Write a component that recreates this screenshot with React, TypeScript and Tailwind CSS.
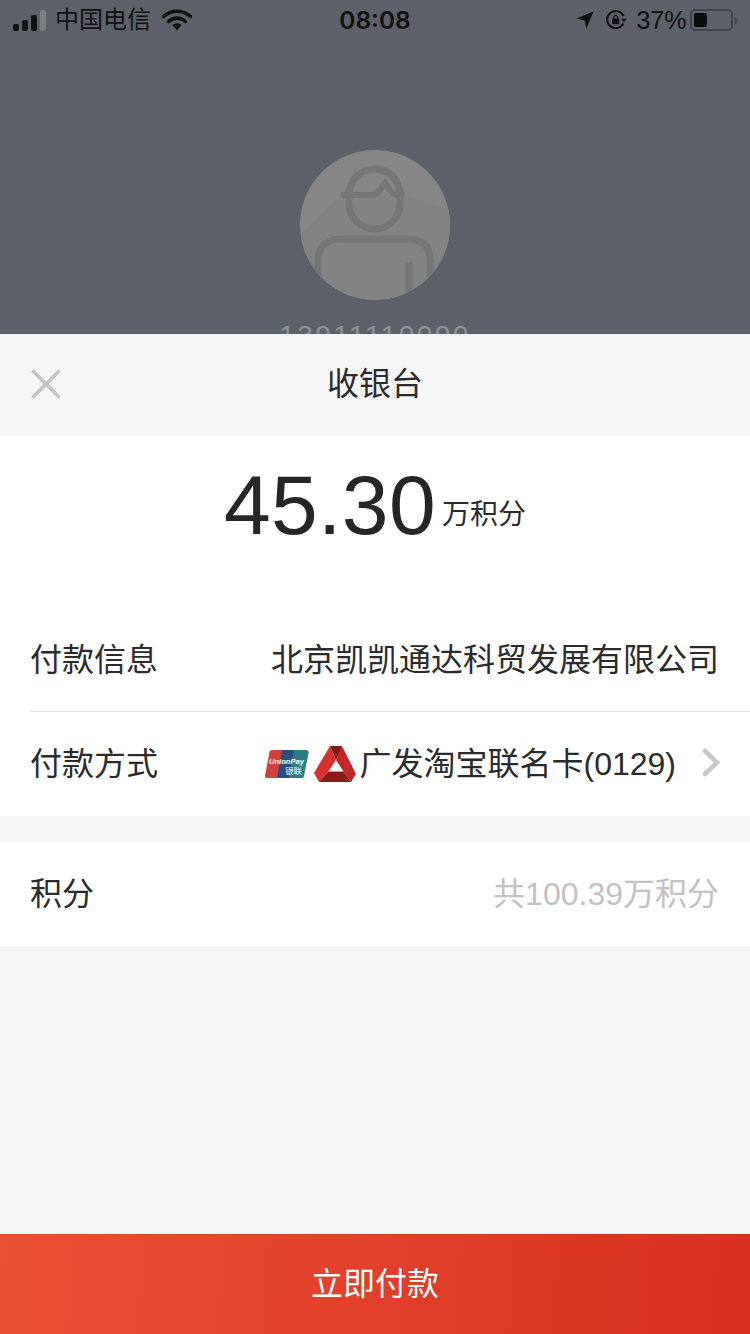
const FONT = "font-['Liberation_Sans','Noto_Sans_CJK_SC',sans-serif]";

const SignalBars = () => (
  <svg width="34" height="21" viewBox="0 0 34 21" className="shrink-0">
    <rect x="0" y="14" width="6" height="7" rx="2" fill="#111" />
    <rect x="9" y="10" width="6" height="11" rx="2" fill="#111" />
    <rect x="18" y="5" width="6" height="16" rx="2" fill="#111" />
    <rect x="27" y="0" width="6" height="21" rx="2" fill="#7b7e85" />
  </svg>
);

const Wifi = () => (
  <svg width="30" height="22" viewBox="0 0 30 22" className="shrink-0">
    <path d="M1.5 7.5 C 9 0.5 21 0.5 28.5 7.5" fill="none" stroke="#111" strokeWidth="3.6" strokeLinecap="round" />
    <path d="M6.5 12.5 C 11.5 8 18.5 8 23.5 12.5" fill="none" stroke="#111" strokeWidth="3.6" strokeLinecap="round" />
    <path d="M10.5 16.2 C 13.5 13.6 16.5 13.6 19.5 16.2 L15 21.5 Z" fill="#111" />
  </svg>
);

const LocationArrow = () => (
  <svg width="18" height="18" viewBox="0 0 18 18" className="shrink-0">
    <path d="M17.5 0.5 L10.5 17.5 L8.5 9.5 L0.5 7.5 Z" fill="#111" />
  </svg>
);

const RotationLock = () => (
  <svg width="22" height="22" viewBox="0 0 22 22" className="shrink-0">
    <path d="M18.4 14.5 A 8.6 8.6 0 1 1 18.6 7" fill="none" stroke="#111" strokeWidth="2" />
    <path d="M16.2 9.8 L21.6 9.8 L18.9 13.4 Z" fill="#111" />
    <rect x="7.2" y="9.6" width="7" height="5.6" rx="1" fill="#111" />
    <path d="M8.8 9.8 V8.2 A 1.9 1.9 0 0 1 12.6 8.2 V9.8" fill="none" stroke="#111" strokeWidth="1.2" />
  </svg>
);

const Battery = () => (
  <div className="flex items-center gap-[2px]">
    <div className="flex h-[22px] w-[43px] items-center rounded-[5px] border-2 border-[#42454c] p-[2px]">
      <div className="h-full w-[13px] rounded-[2px] bg-[#0c0c0c]" />
    </div>
    <div className="h-[7px] w-[1.5px] rounded-r bg-[#42454c]" />
  </div>
);

const StatusBar = () => (
  <div className={`${FONT} flex h-[40px] items-center justify-between pl-[13px] pr-[13px] text-[#111]`}>
    <div className="flex w-[220px] items-center">
      <SignalBars />
      <span className="ml-[8px] text-[24px] leading-none">中国电信</span>
      <div className="ml-[11px]"><Wifi /></div>
    </div>
    <span className="font-['Inter',sans-serif] text-[24.5px] font-semibold leading-none">08:08</span>
    <div className="flex w-[220px] items-center justify-end">
      <LocationArrow />
      <div className="ml-[11px]"><RotationLock /></div>
      <span className="ml-[9px] text-[25px] leading-none">37%</span>
      <div className="ml-[4px]"><Battery /></div>
    </div>
  </div>
);

const Avatar = () => (
  <div className="relative mx-auto mt-[110px] h-[150px] w-[150px] overflow-hidden rounded-full bg-[#868686]">
    <svg width="150" height="150" viewBox="0 0 150 150" fill="none" stroke="#767676" strokeWidth="7">
      <path d="M42 43 L0 85 V150 H150 V60 L105 45 Z" fill="#838383" stroke="none" />
      <rect x="49" y="19" width="51" height="60" rx="25.5" />
      <path d="M41 45 H73 C 78 45 82 37 85 33 C 88 38 92 45 98 45 H105" strokeWidth="6" />
      <path d="M18 150 V110 C 18 96 28 89 40 89 H108 C 122 89 130 96 130 110 V150" />
      <path d="M109 112 V150" />
    </svg>
  </div>
);

const Row = ({ label, children, border, className = 'pr-[31px]' }: { label: string; children: React.ReactNode; border?: boolean; className?: string }) => (
  <div className={`ml-[30px] flex h-[104px] items-center justify-between ${className} ${border ? 'border-b border-[#e2e2e2]' : ''}`}>
    <span className="text-[32px] leading-none text-[#2b2b2b]">{label}</span>
    {children}
  </div>
);

const UnionPay = () => (
  <svg width="44" height="28" viewBox="0 0 44 28" className="shrink-0">
    <path d="M7 0 H19 L14 28 H2 C0.5 28 -0.3 27 0 25.5 L4.5 2 C4.8 0.8 5.5 0 7 0 Z" fill="#d2413c" />
    <path d="M17 0 H31 L26 28 H12 Z" fill="#2a4f7f" />
    <path d="M29 0 H41 C43 0 44 1 43.6 3 L39 26 C38.7 27.4 38 28 36.5 28 H24 Z" fill="#2d7e80" />
    <text x="4" y="14" fontSize="7.6" fontWeight="700" fontStyle="italic" fill="#fff" fontFamily="Liberation Sans">UnionPay</text>
    <text x="20" y="24" fontSize="8.5" fill="#fff" fontFamily="Noto Sans CJK SC">银联</text>
  </svg>
);

const BankLogo = () => (
  <svg width="42" height="37" viewBox="0 0 42 37" className="shrink-0">
    <path d="M16 0 L0 27 L5 36 L15 25 L22 14 Z" fill="#d9312f" />
    <path d="M16 0 H28 L25 8 L22 14 Z" fill="#851714" />
    <path d="M28 0 L42 28 L37 36 L29 25 L22 14 Z" fill="#c22829" />
    <path d="M5 36 L15 25 H29 L37 36 Z" fill="#8c1a17" />
    <path d="M22 15 L29.5 25.5 H14.5 Z" fill="#fff" />
  </svg>
);

export default function App() {
  return (
    <div className={`${FONT} flex h-[1334px] w-[750px] flex-col overflow-hidden bg-[#f6f6f6]`}>
      <div className="relative h-[334px] shrink-0 overflow-hidden bg-[#5d616a]">
        <StatusBar />
        <Avatar />
        <div className="mt-[22px] text-center text-[28px] leading-none tracking-[2.4px] text-[#8f9298]">13911110000</div>
      </div>

      <div className="relative flex h-[102px] shrink-0 items-center justify-center">
        <svg width="30" height="30" viewBox="0 0 30 30" className="absolute left-[31px] top-[35px]">
          <path d="M2.5 2.5 L27.5 27.5 M27.5 2.5 L2.5 27.5" stroke="#c4c4c4" strokeWidth="3.6" strokeLinecap="round" />
        </svg>
        <span className="-mt-[3px] text-[32px] leading-none text-[#2b2b2b]">收银台</span>
      </div>

      <div className="h-[380px] shrink-0 bg-white">
        <div className="flex h-[172px] items-start justify-center pt-[23px]">
          <span className="text-[84px] leading-[92px] tracking-[0.4px] text-[#262626]">45.30</span>
          <span className="ml-[6px] mt-[38px] text-[28px] leading-[36px] text-[#2b2b2b]">万积分</span>
        </div>
        <Row label="付款信息" border>
          <span className="text-[32px] leading-none text-[#2b2b2b]">北京凯凯通达科贸发展有限公司</span>
        </Row>
        <Row label="付款方式" className="pr-[29px]">
          <div className="flex items-center">
            <UnionPay />
            <div className="ml-[5px]"><BankLogo /></div>
            <span className="ml-[3px] text-[32px] leading-none text-[#2b2b2b]">广发淘宝联名卡(0129)</span>
            <svg width="20" height="30" viewBox="0 0 20 30" className="ml-[25px] -mt-[2px]">
              <path d="M4 3 L16 14.5 L4 26" fill="none" stroke="#c8c8c8" strokeWidth="4.6" strokeLinecap="round" />
            </svg>
          </div>
        </Row>
      </div>

      <div className="mt-[26px] h-[104px] shrink-0 bg-white">
        <Row label="积分">
          <span className="text-[32px] leading-none text-[#c2c2c2]">共100.39万积分</span>
        </Row>
      </div>

      <div className="flex-1" />

      <div className="flex h-[100px] shrink-0 items-center justify-center bg-[linear-gradient(95deg,#ea5034,#d82f21)]">
        <span className="text-[32px] leading-none text-white">立即付款</span>
      </div>
    </div>
  );
}
